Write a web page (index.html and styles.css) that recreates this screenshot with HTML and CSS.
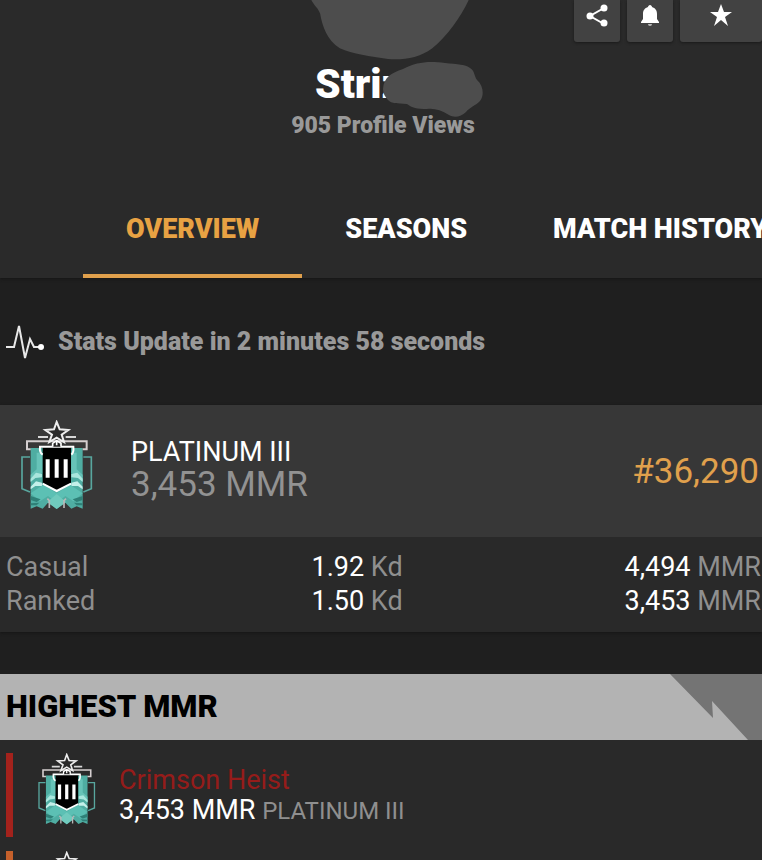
FILE: index.html
```html
<!DOCTYPE html>
<html lang="en">
<head>
  <meta charset="UTF-8" />
  <meta name="viewport" content="width=device-width, initial-scale=1" />
  <title>Player profile</title>
  <link rel="stylesheet" href="styles.css">
</head>
<body>

  <!-- shared rank badge -->
  <svg class="sprite" aria-hidden="true">
    <symbol id="badge" viewBox="34 42 214 270">
      <path d="M62 126H218V308L200 301L184 308L166 290L140 309L114 290L98 308L80 301L62 308Z" fill="#4fada2"/>
      <path d="M80 140H98V200L62 226V206L80 190ZM200 140H184V200L218 226V206L200 190Z" fill="#67c3b8"/>
      <path d="M62 218L78 200L96 204V214L76 216L62 228ZM218 218L202 200L184 204V214L204 216L218 228Z" fill="#a9e6dd"/>
      <path d="M62 242L78 226L96 230V240L76 240L62 250ZM218 242L202 226L184 230V240L204 240L218 250Z" fill="#c4f0ea"/>
      <path d="M62 262L100 236L140 262L180 236L218 262L190 286L166 270L140 290L114 270L90 286Z" fill="#5cc0b4"/>
      <path d="M140 264L168 288L140 309L112 288Z" fill="#70cabd"/>
      <path d="M62 270L92 280L80 288L62 282ZM218 270L188 280L200 288L218 282ZM62 292L88 290L80 298L62 298ZM218 292L192 290L200 298L218 298Z" fill="#2f8077"/>
      <path d="M60 153H36V248L60 258M220 153H244V248L220 258" fill="none" stroke="#58a69e" stroke-width="5"/>
      <path d="M112 278L118 284V306M168 278L162 284V306" fill="none" stroke="#b8b8b8" stroke-width="5"/>
      <path d="M62 130H51V106H230V130H218" fill="none" stroke="#d5cfd0" stroke-width="6"/>
      <path d="M98 122H183V232L140 254L98 232Z" fill="#000"/>
      <path d="M98 146Q88 140 90 122H190Q192 140 184 146M98 233L140 255L183 233" fill="none" stroke="#fff" stroke-width="6"/>
      <path d="M107 160H119V215H107ZM134 160H146V215H134ZM161 160H173V215H161Z" fill="#fff"/>
      <path d="M128 122V112L140 104L153 112V122M140 104V118" fill="#222" stroke="#fff" stroke-width="5"/>
      <path d="M84 93H114M167 93H198" stroke="#d8d8d8" stroke-width="6"/>
      <path d="M140 48L149 70L175 72L155 86L162 108L140 95L118 108L126 86L106 72L132 70Z" fill="#292929" stroke="#eee" stroke-width="6"/>
    </symbol>
  </svg>

  <header class="header">
    <svg class="avatar" viewBox="0 0 160 61" aria-hidden="true">
      <path d="M0 0H160C152 17 138 37 123 49C109 59 95 61 78 60C60 57 42 55 29 49C16 41 11 26 9 14C7 8 3 6 0 0Z"/>
    </svg>

    <div class="actions">
      <button type="button" class="action-btn" aria-label="Share">
        <svg width="22" height="24" viewBox="0 0 22 24">
          <path d="M18 4L4 12L18 20" fill="none" stroke="#fff" stroke-width="2"/>
          <circle cx="18" cy="4" r="3.5"/><circle cx="4" cy="12" r="3.5"/><circle cx="18" cy="19" r="3.5"/>
        </svg>
      </button>
      <button type="button" class="action-btn" aria-label="Notifications">
        <svg width="20" height="24" viewBox="0 0 20 24">
          <path d="M10 1C11 1 12 2 12 3C15 4 17 6 17 10V15L19 18V19H1V18L3 15V10C3 6 5 4 8 3C8 2 9 1 10 1Z"/>
          <path d="M8 20H12Q12 22 10 22Q8 22 8 20Z" fill="#bbb"/>
        </svg>
      </button>
      <button type="button" class="action-btn wide" aria-label="Add to favorites">
        <svg width="22" height="24" viewBox="0 0 22 24">
          <path d="M11 0L14 8H22L15 13L18 22L11 16L4 22L7 13L0 8H8Z"/>
        </svg>
      </button>
    </div>

    <h1 class="name">Striz
      <svg class="name-cover" viewBox="0 0 100 57" aria-hidden="true">
        <path d="M0 28C1 16 8 12 20 8C34 1 45 0 62 2C74 3 84 4 87 7C92 10 91 15 94 19C101 25 101 35 97 40C92 45 87 46 83 51C78 56 71 57 66 54C58 49 51 47 44 48C34 48 29 47 24 43C14 42 9 43 5 39C2 36 0 32 0 28Z"/>
      </svg>
    </h1>
    <p class="views">905 Profile Views</p>

    <nav class="tabs">
      <a href="#overview" class="tab active">OVERVIEW</a>
      <a href="#seasons" class="tab">SEASONS</a>
      <a href="#matches" class="tab">MATCH HISTORY</a>
    </nav>
  </header>

  <main>
    <div class="update">
      <svg width="38" height="36" viewBox="0 0 38 36" aria-hidden="true">
        <path d="M0 23H8L13 2L19 34L24 15L28 23H34" fill="none" stroke="#e8e8e8" stroke-width="2"/>
        <circle cx="35" cy="23" r="3" fill="#fff"/>
      </svg>
      <p>Stats Update in 2 minutes 58 seconds</p>
    </div>

    <section class="rank-card" id="overview">
      <div class="rank">
        <svg class="badge" aria-hidden="true"><use href="#badge"/></svg>
        <div class="rank-info">
          <div class="rank-name">PLATINUM III</div>
          <div class="rank-mmr">3,453 MMR</div>
        </div>
        <div class="rank-position">#36,290</div>
      </div>

      <table class="playlists">
        <tr>
          <th scope="row">Casual</th>
          <td class="kd">1.92 <span>Kd</span></td>
          <td class="mmr">4,494 <span>MMR</span></td>
        </tr>
        <tr>
          <th scope="row">Ranked</th>
          <td class="kd">1.50 <span>Kd</span></td>
          <td class="mmr">3,453 <span>MMR</span></td>
        </tr>
      </table>
    </section>

    <section class="highest">
      <div class="section-title">
        <h2>HIGHEST MMR</h2>
        <svg class="corner" viewBox="0 0 92 66" aria-hidden="true">
          <path d="M0 0H92V66H78L42 27L43 44Z"/>
        </svg>
      </div>

      <div class="season crimson">
        <svg class="badge small" aria-hidden="true"><use href="#badge"/></svg>
        <div class="season-info">
          <div class="season-name">Crimson Heist</div>
          <div class="season-mmr">3,453 MMR <span>PLATINUM III</span></div>
        </div>
      </div>
      <div class="season orange">
        <svg class="badge small" aria-hidden="true"><use href="#badge"/></svg>
      </div>
    </section>
  </main>

</body>
</html>
```

FILE: styles.css
```css
* {
  box-sizing: border-box;
}

body {
  margin: 0;
  height: 100vh;
  overflow: hidden;
  font-family: Roboto, sans-serif;
  background-color: #1f1f1f;
  color: #fff;
}

h1, h2, p {
  margin: 0;
}

.sprite {
  position: absolute;
  width: 0;
  height: 0;
}

/* header */
.header {
  position: relative;
  display: flex;
  flex-direction: column;
  align-items: center;
  background-color: #2a2a2a;
  box-shadow: 0 1px 3px #151515;
}

.avatar {
  width: 160px;
  height: 60px;
  margin-left: 18px;
  fill: #4d4d4d;
}

.actions {
  position: absolute;
  top: 0;
  right: 0;
  display: flex;
  gap: 7px;
}

.action-btn {
  display: flex;
  justify-content: center;
  width: 46px;
  height: 42px;
  padding: 4px 0 0;
  border: none;
  border-radius: 0 0 3px 3px;
  background-color: #424242;
  box-shadow: 0 1px 3px #1a1a1a;
  cursor: pointer;
}

.action-btn.wide {
  width: 82px;
}

.action-btn svg {
  fill: #fff;
}

.name {
  position: relative;
  width: 136px;
  margin-left: 4px;
  font-size: 41px;
  line-height: 48px;
  font-weight: 900;
}

.name-cover {
  position: absolute;
  top: 1px;
  left: 68px;
  width: 100px;
  height: 57px;
  fill: #4d4d4d;
}

.views {
  margin-left: 4px;
  padding-top: 2px;
  font-size: 23px;
  line-height: 32px;
  font-weight: 900;
  color: #999;
}

.tabs {
  display: flex;
  width: 100%;
  margin-top: 36px;
  padding-left: 83px;
  overflow: hidden;
}

.tab {
  flex: none;
  height: 100px;
  padding: 0 43px;
  border-bottom: 4px solid transparent;
  font-size: 27px;
  line-height: 102px;
  font-weight: 900;
  color: #fff;
  text-decoration: none;
}

.tab.active {
  color: #e8a243;
  border-color: #e0a04c;
}

/* stats timer */
.update {
  display: flex;
  align-items: center;
  gap: 14px;
  height: 127px;
  padding-left: 6px;
  font-size: 25px;
  font-weight: 900;
  color: #999;
}

/* current rank */
.rank-card {
  background-color: #292929;
  box-shadow: 0 1px 3px #151515;
}

.rank {
  display: flex;
  align-items: center;
  height: 132px;
  padding: 0 3px 0 21px;
  background-color: #373737;
}

.badge {
  flex: none;
  width: 72px;
  height: 90px;
  margin-bottom: 12px;
}

.badge.small {
  width: 58px;
  height: 72px;
}

.rank-info {
  flex: 1;
  margin-left: 38px;
}

.rank-name {
  font-size: 27px;
  line-height: 28px;
}

.rank-mmr {
  font-size: 35px;
  line-height: 38px;
  color: #929292;
}

.rank-position {
  font-size: 35px;
  color: #e0a04c;
}

.playlists {
  width: 100%;
  height: 95px;
  padding: 14px 1px 14px 6px;
  border-spacing: 0;
  font-size: 27px;
  line-height: 33px;
}

.playlists th,
.playlists td {
  padding: 0;
  font-weight: 400;
}

.playlists th {
  width: 31%;
  text-align: left;
  color: #8f8f8f;
}

.playlists span {
  color: #8f8f8f;
}

.kd {
  width: 31%;
  text-align: center;
}

.mmr {
  text-align: right;
}

/* best seasons */
.highest {
  margin-top: 42px;
  background-color: #292929;
}

.section-title {
  display: flex;
  justify-content: space-between;
  height: 66px;
  padding-left: 6px;
  background-color: #b3b3b3;
  color: #000;
}

.section-title h2 {
  font-size: 31px;
  line-height: 66px;
  font-weight: 900;
}

.corner {
  width: 92px;
  height: 66px;
  fill: #747474;
}

.season {
  display: flex;
  height: 84px;
  margin: 13px 0 14px 6px;
  padding-left: 25px;
  border-left: 7px solid;
}

.season.crimson {
  border-color: #a3221c;
}

.season.orange {
  border-color: #c5602b;
}

.season-info {
  margin: 12px 0 0 23px;
}

.season-name {
  font-size: 27px;
  line-height: 30px;
  color: #951c1a;
}

.season-mmr {
  font-size: 27px;
  line-height: 30px;
}

.season-mmr span {
  font-size: 24px;
  color: #8f8f8f;
}
```
